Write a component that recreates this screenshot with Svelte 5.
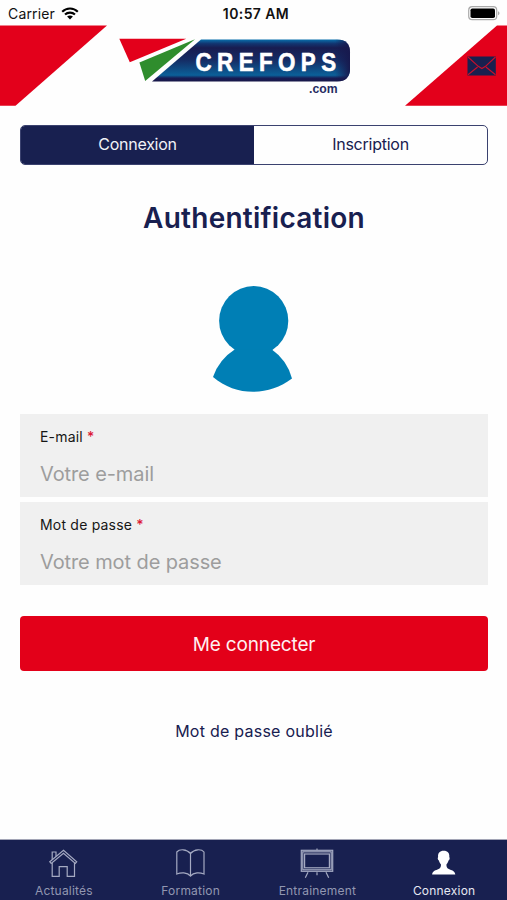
<script lang="ts">
	type Mode = 'connexion' | 'inscription';
	type TabKey = 'news' | 'training' | 'practice' | 'account';

	let mode = $state<Mode>('connexion');
	let activeTab = $state<TabKey>('account');
	let email = $state('');
	let password = $state('');

	const modes: { key: Mode; label: string }[] = [
		{ key: 'connexion', label: 'Connexion' },
		{ key: 'inscription', label: 'Inscription' }
	];

	const tabs: { key: TabKey; label: string }[] = [
		{ key: 'news', label: 'Actualités' },
		{ key: 'training', label: 'Formation' },
		{ key: 'practice', label: 'Entrainement' },
		{ key: 'account', label: 'Connexion' }
	];
</script>

<div class="screen">
	<div class="status-bar">
		<div class="carrier">
			<span>Carrier</span>
			<svg width="18" height="13" viewBox="0 0 18 13" aria-hidden="true">
				<g fill="none" stroke="#000" stroke-width="2.1">
					<path d="M1.2 4.7C5.5.4 12.5.4 16.8 4.7" />
					<path d="M4 7.6c2.8-2.7 7.2-2.7 10 0" />
				</g>
				<path d="M6.1 9.6c1.7-1.5 4.1-1.5 5.8 0L9 12.5z" />
			</svg>
		</div>
		<span class="clock">10:57 AM</span>
		<svg class="battery" width="32" height="15" viewBox="0 0 32 15" aria-hidden="true">
			<rect x=".7" y=".7" width="28" height="13" rx="3.5" fill="none" stroke="#aaa" stroke-width="1.2" />
			<rect x="2.5" y="2.5" width="24.5" height="9.5" rx="1.8" />
			<path d="M30.3 5.2c1.4.5 1.4 3.5 0 4z" fill="#888" />
		</svg>
	</div>

	<header>
		<svg width="507" height="81" viewBox="0 25 507 81" role="img" aria-label="CREFOPS.com">
			<defs>
				<linearGradient id="plate" x1="0" y1="0" x2="0" y2="1">
					<stop offset="0" stop-color="#086fac" />
					<stop offset=".1" stop-color="#12346f" />
					<stop offset=".2" stop-color="#181c50" />
					<stop offset=".48" stop-color="#152b63" />
					<stop offset=".85" stop-color="#0b6099" />
					<stop offset=".92" stop-color="#181c55" />
					<stop offset="1" stop-color="#171748" />
				</linearGradient>
				<linearGradient id="edge" x1="0" y1="0" x2="1" y2="0">
					<stop offset="0" stop-color="#17194e" stop-opacity="0" />
					<stop offset="1" stop-color="#17194e" />
				</linearGradient>
			</defs>
			<path d="M0 25.5h107L15.5 105.8H0z" fill="#e3001b" />
			<path d="M507 25.5h-10L405 105.8h102z" fill="#e3001b" />
			<path d="M119.3 38.8h67l-56.5 23.4z" fill="#e3001b" />
			<path d="M139.4 62.5L195 39.3 145.2 81z" fill="#2f8d2d" />
			<path d="M201 39.5h136q13 0 13 13v16.3q0 12.7-13 12.7H152z" fill="url(#plate)" />
			<path d="M335 39.5h2q13 0 13 13v16.3q0 12.7-13 12.7h-2z" fill="url(#edge)" />
			<text class="brand" transform="translate(195.5 70.5) scale(.86 1)" textLength="163.5">CREFOPS</text>
			<text class="domain" x="309" y="92.5" textLength="28.5" lengthAdjust="spacingAndGlyphs">.com</text>
			<rect x="467.5" y="56.5" width="28.3" height="19" fill="#19204f" />
			<path d="M468 57l10.3 9.3 3.6 2.2 3.6-2.2L495.5 57M468 74.8l9.6-7.8M495.5 74.8l-9.6-7.8" fill="none" stroke="#c9102b" stroke-width="1.1" />
		</svg>
	</header>

	<main>
		<div class="segments">
			{#each modes as item}
				<button class="segment" class:selected={mode === item.key} onclick={() => (mode = item.key)}>
					<span>{item.label}</span>
				</button>
			{/each}
		</div>

		<h1><span>Authentification</span></h1>

		<svg class="avatar" width="80" height="107" viewBox="213 286 80 107" aria-hidden="true">
			<g fill="#007fb5">
				<circle cx="253.7" cy="320.7" r="34.6" />
				<path d="M235 349.3Q219 359.5 213 377C236 396.5 268 396.5 292 378.5Q287 360 271.5 349.3z" />
			</g>
		</svg>

		<form onsubmit={(e) => e.preventDefault()}>
			<label class="field">
				<span class="field-label">E-mail <b>*</b></span>
				<input type="email" placeholder="Votre e-mail" bind:value={email} />
			</label>
			<label class="field">
				<span class="field-label">Mot de passe <b>*</b></span>
				<input type="password" placeholder="Votre mot de passe" bind:value={password} />
			</label>
			<button class="submit" type="submit">Me connecter</button>
		</form>

		<button class="forgot">Mot de passe oublié</button>
	</main>

	<nav>
		{#each tabs as tab}
			<button class="tab" class:active={activeTab === tab.key} onclick={() => (activeTab = tab.key)}>
				<svg width="36" height="32" viewBox="0 0 36 32" aria-hidden="true">
					{#if tab.key === 'news'}
						<path d="M7.2 11.8V4h3.8v4.6" />
						<path d="M4.8 13.8L18.5 2.2l13.2 11.6-1.4 1.7L18.5 5.2 6.2 15.5z" />
						<path d="M7.2 15v13.3h7V18.7h8v9.6H29.5V15" />
					{:else if tab.key === 'training'}
						<path d="M18.5 5.5C14.5.8 7.5.8 4.8 4v22c4-1.6 10.4-2 13.7 2 3.3-4 9.5-3.6 13.5-2V4C29.5.8 22.5.8 18.5 5.5zM18.5 5.5V28" />
					{:else if tab.key === 'practice'}
						<rect x="2.3" y="2.3" width="31.4" height="21" />
						<rect x="3.8" y="3.8" width="28.4" height="18" />
						<rect x="5.6" y="6" width="24.8" height="13.8" />
						<path d="M18 .5v1.8M9 24.3l-2.7 5.5M18 24.3v3M27 24.3l2.7 5.5" />
					{:else}
						<path class="solid" d="M17.7 2.8c-4 0-6 2.5-5.6 6.1-.8 1-.2 3.2.8 3.7.3 1.6 1 2.7 2 3.6.2 2.3-.2 3.7-2.3 4.8-2.8 1.4-6 1.6-6.5 5.5h23.2c-.5-3.9-3.7-4.1-6.5-5.5-2.1-1.1-2.5-2.5-2.3-4.8 1-.9 1.7-2 2-3.6 1-.5 1.6-2.7.8-3.7.4-3.6-1.6-6.1-5.6-6.1z" />
					{/if}
				</svg>
				<span class="tab-label">{tab.label}</span>
			</button>
		{/each}
	</nav>
</div>

<style>
	:global(body) {
		background: #fefefe;
	}

	.screen {
		display: flex;
		flex-direction: column;
		width: 507px;
		height: 900px;
		overflow: hidden;
		background: #fefefe;
		color: #182050;
		font-family: Inter, 'Liberation Sans', sans-serif;
	}

	button,
	input {
		margin: 0;
		padding: 0;
		border: 0;
		border-radius: 0;
		background: none;
		color: inherit;
		font: inherit;
		letter-spacing: inherit;
		outline: none;
	}

	.status-bar {
		display: grid;
		grid-template-columns: 1fr auto 1fr;
		align-items: center;
		box-sizing: border-box;
		height: 25px;
		padding: 2px 7px 0 8px;
		color: #111;
		font-size: 14px;
		line-height: 20px;
	}

	.carrier {
		display: flex;
		align-items: center;
		gap: 6px;
		letter-spacing: 0.15px;
	}

	.clock {
		padding-left: 4px;
		font-weight: 600;
		letter-spacing: 0.4px;
	}

	.battery {
		justify-self: end;
	}

	header {
		height: 81px;
	}

	header svg {
		display: block;
	}

	.brand {
		fill: #fff;
		stroke: #fff;
		stroke-width: 0.6px;
		font-family: 'Liberation Sans', sans-serif;
		font-size: 26px;
		font-weight: 700;
	}

	.domain {
		fill: #262c62;
		font-family: 'Liberation Sans', sans-serif;
		font-size: 12px;
		font-weight: 700;
	}

	main {
		display: flex;
		flex: 1;
		flex-direction: column;
		align-items: center;
		padding: 19px 19px 0 20px;
	}

	.segments {
		display: flex;
		align-self: stretch;
		box-sizing: border-box;
		height: 40px;
		overflow: hidden;
		border: 1.5px solid #3b426f;
		border-radius: 5px;
	}

	.segment {
		flex: 1;
		padding-bottom: 2px;
		font-size: 16px;
		letter-spacing: -0.25px;
	}

	.segment.selected {
		background: #182050;
		color: #f1f2f7;
	}

	h1 {
		margin: 35px 0 0;
		font-size: 28px;
		font-weight: 600;
		letter-spacing: 0.25px;
		line-height: 36px;
	}

	.avatar {
		display: block;
		margin: 50px 2px 0 0;
	}

	form {
		display: flex;
		flex-direction: column;
		align-self: stretch;
		gap: 5px;
		margin-top: 21px;
	}

	.field {
		display: flex;
		flex-direction: column;
		box-sizing: border-box;
		height: 83px;
		padding: 13px 20px 0;
		background: #f0f0f0;
	}

	.field-label {
		color: #161616;
		font-size: 14px;
		letter-spacing: 0.2px;
		line-height: 20px;
	}

	.field-label b {
		color: #dc1836;
		font-weight: 500;
	}

	input {
		height: 30px;
		margin-top: 12px;
		font-size: 20px;
		letter-spacing: -0.1px;
	}

	input::placeholder {
		color: #9d9d9d;
		opacity: 1;
	}

	.submit {
		height: 55px;
		margin-top: 26px;
		padding-top: 1px;
		border-radius: 4px;
		background: #e30019;
		color: #fff0f1;
		font-size: 19px;
		letter-spacing: -0.15px;
	}

	.forgot {
		margin-top: 48px;
		font-size: 16px;
		letter-spacing: 0.25px;
		line-height: 24px;
	}

	nav {
		display: flex;
		box-sizing: border-box;
		height: 61px;
		border-top: 1px solid #a3a5b6;
		background: #182050;
	}

	.tab {
		display: flex;
		flex: 1;
		flex-direction: column;
		align-items: center;
		padding-top: 8px;
		color: #9297b1;
		font-size: 12px;
		letter-spacing: 0.2px;
	}

	.tab svg {
		fill: none;
		stroke: #a5aac2;
		stroke-width: 1.2;
	}

	.tab .solid {
		fill: #fff;
		stroke: none;
	}

	.tab-label {
		margin-top: 3px;
		padding-left: 1px;
		line-height: 16px;
	}

	.tab.active {
		color: #e6e8f2;
	}
</style>
